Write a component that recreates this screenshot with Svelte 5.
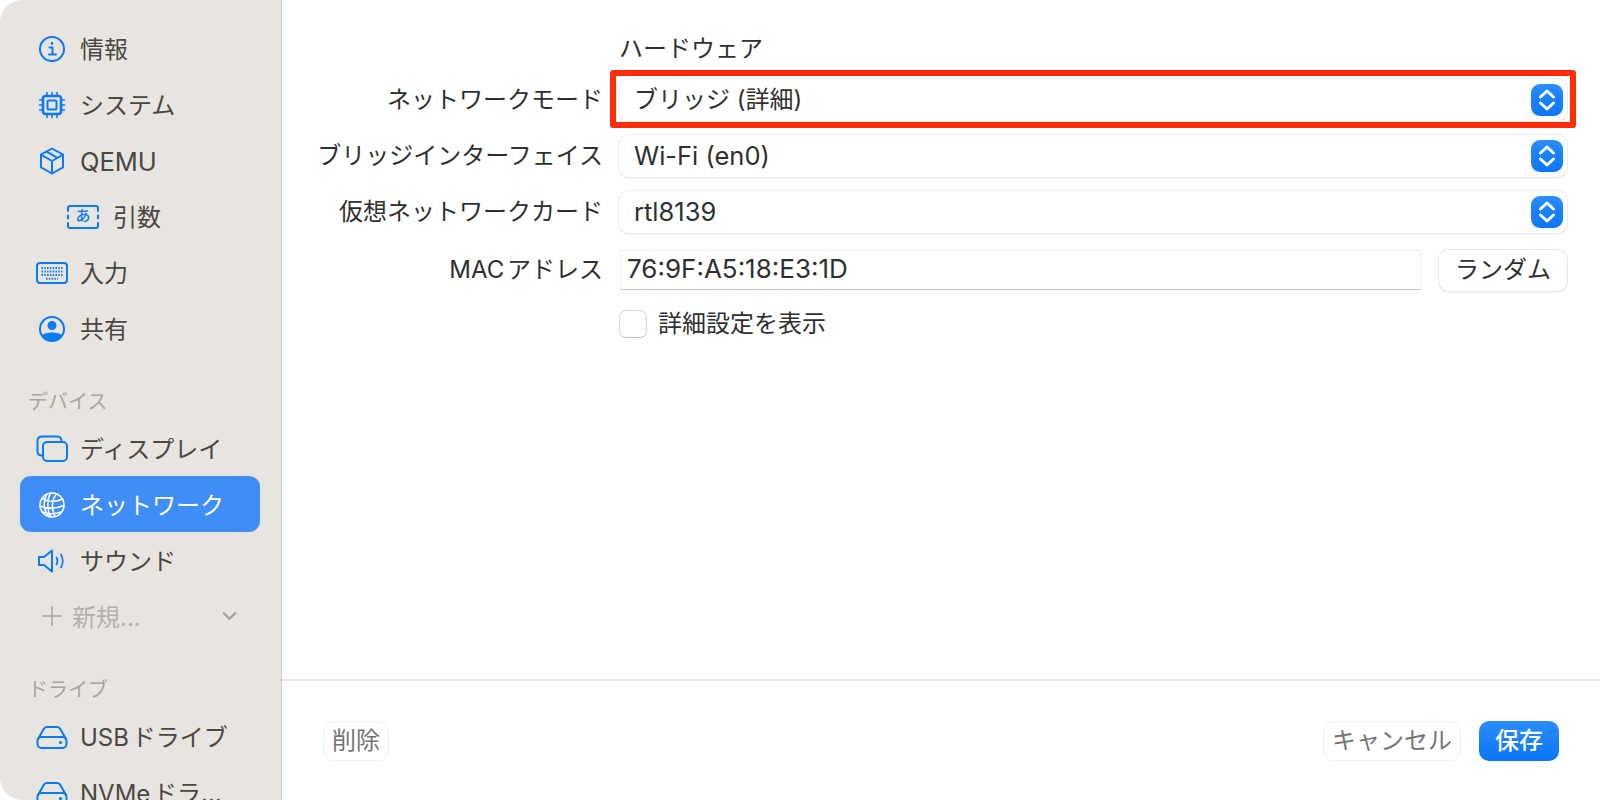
<script>
  const top = [
    { icon: 'info', label: '情報' },
    { icon: 'cpu', label: 'システム' },
    { icon: 'box', label: 'QEMU', latin: true },
    { icon: 'args', label: '引数', sub: true },
    { icon: 'keyboard', label: '入力' },
    { icon: 'person', label: '共有' }
  ];
  const devices = [
    { icon: 'display', label: 'ディスプレイ' },
    { icon: 'globe', label: 'ネットワーク', active: true },
    { icon: 'speaker', label: 'サウンド' }
  ];
  const drives = [
    { icon: 'drive', label: 'USB ドライブ' },
    { icon: 'drive', label: 'NVMe ドライブ' }
  ];
  const selects = [
    { label: 'ネットワークモード', value: 'ブリッジ (詳細)' },
    { label: 'ブリッジインターフェイス', value: 'Wi-Fi (en0)', latin: true },
    { label: '仮想ネットワークカード', value: 'rtl8139', latin: true }
  ];
</script>

{#snippet icon(name)}
  <svg class="ico" viewBox="0 0 32 32" fill="none" stroke="currentColor" stroke-width="2" stroke-linecap="round" stroke-linejoin="round">
    {#if name === 'info'}
      <circle cx="16" cy="16" r="12" />
      <path d="M13.5 14.5H16.5V21.5M13 21.5H20" />
      <circle cx="16" cy="10.5" r="1.4" fill="currentColor" stroke="none" />
    {:else if name === 'cpu'}
      <rect x="7" y="7" width="18" height="18" rx="2.5" stroke-width="2.6" />
      <rect x="11.5" y="11.5" width="9" height="9" rx="1" />
      <path stroke-width="1.6" d="M11 3.5V6M16 3.5V6M21 3.5V6M11 26V28.500M16 26V28.500M21 26V28.500M3.500 11H6M3.500 16H6M3.500 21H6M26 11H28.500M26 16H28.500M26 21H28.500" />
    {:else if name === 'box'}
      <path d="M16 3.500 27 9.700V22.300L16 28.500 5 22.300V9.700Z" />
      <path d="M5 9.700 16 16 27 9.700M16 16V28.500M10.500 6.600 21.500 12.900" />
    {:else if name === 'args'}
      <path d="M1 10V7Q1 5 3 5H29Q31 5 31 7V10M1 22V25Q1 27 3 27H29Q31 27 31 25V22M1 14.500V17.500M31 14.500V17.500" />
    {:else if name === 'keyboard'}
      <rect x="1" y="6" width="30" height="20" rx="3" />
      <path stroke-width="2" stroke-dasharray="1.500 1.300" stroke-linecap="butt" d="M5.500 11H26.500M5.500 14.500H26.500M5.500 18H26.500M10 21.800H22" />
    {:else if name === 'person'}
      <circle cx="16" cy="16" r="12" />
      <circle cx="16" cy="12.500" r="4.500" fill="currentColor" stroke="none" />
      <path d="M6 22.500C8.500 18.500 23.500 18.500 26 22.500 23 30 9 30 6 22.500Z" fill="currentColor" stroke="none" />
    {:else if name === 'display'}
      <path d="M6 22.500Q1.500 22.500 1.500 18V8Q1.500 3.500 6 3.500H21Q25.500 3.500 25.500 8" />
      <rect x="7" y="9" width="24" height="19" rx="4" />
    {:else if name === 'globe'}
      <g stroke-width="1.600">
        <circle cx="16" cy="16" r="12" />
        <path d="M10.500 5.500C6.500 13 8 23 13 27.600M21 5C15.500 9.500 15 21 19 27.500M6 9.500C12 13 21 13 26.500 10M4.200 17C11 20 20 20 27.800 16.500M6 23C12 25 20 25 25 23M15 4C11 9 10.500 22 15 28" />
      </g>
    {:else if name === 'speaker'}
      <path d="M3 12V20H8L16 26.500V5.500L8 12Z" />
      <path stroke-width="1.700" d="M20.500 12.500Q22.500 16 20.500 19.500M25 9.500Q28.500 16 25 22.500" />
    {:else if name === 'drive'}
      <path d="M2 18 8 7.500Q9 6 11 6H21Q23 6 24 7.500L30 18" />
      <rect x="1.500" y="16" width="29" height="11" rx="4" />
      <circle cx="24.500" cy="21.500" r="1.600" fill="currentColor" stroke="none" />
    {/if}
  </svg>
{/snippet}

{#snippet item(row)}
  <div class="item" class:sub={row.sub} class:active={row.active}>
    <span class="ico-box">
      {@render icon(row.icon)}
      {#if row.icon === 'args'}<span class="kana">あ</span>{/if}
    </span>
    <span class="item-label" class:latin={row.latin}>{row.label}</span>
  </div>
{/snippet}

<div class="window">
  <aside class="sidebar">
    {#each top as row}
      {@render item(row)}
    {/each}

    <div class="section">デバイス</div>
    {#each devices as row}
      {@render item(row)}
    {/each}
    <div class="item add">
      <svg class="plus" viewBox="0 0 24 24" fill="none" stroke="currentColor" stroke-width="2" stroke-linecap="round">
        <path d="M12 2V22M2 12H22" />
      </svg>
      <span class="item-label">新規...</span>
      <svg class="chev" viewBox="0 0 16 10" fill="none" stroke="currentColor" stroke-width="2.400" stroke-linecap="round" stroke-linejoin="round">
        <path d="M2 2 8 8 14 2" />
      </svg>
    </div>

    <div class="section">ドライブ</div>
    {#each drives as row}
      {@render item(row)}
    {/each}
  </aside>

  <main class="main">
    <div class="form">
      <div class="highlight"></div>
      <div></div>
      <div class="heading">ハードウェア</div>

      {#each selects as s}
        <div class="label">{s.label}</div>
        <div class="select">
          <span class="value" class:latin={s.latin}>{s.value}</span>
          <span class="stepper">
            <svg viewBox="0 0 32 32" fill="none" stroke="#fff" stroke-width="3" stroke-linecap="round" stroke-linejoin="round">
              <path d="M9.500 13 16 7 22.500 13M9.500 19 16 25 22.500 19" />
            </svg>
          </span>
        </div>
      {/each}

      <div class="label mac-label">MAC アドレス</div>
      <div class="mac-row">
        <div class="mac-input">76:9F:A5:18:E3:1D</div>
        <div class="btn random">ランダム</div>
      </div>

      <div></div>
      <div class="check-row">
        <span class="check"></span>
        <span class="check-text">詳細設定を表示</span>
      </div>
    </div>

    <footer class="footer">
      <div class="btn ghost">削除</div>
      <div class="right">
        <div class="btn ghost">キャンセル</div>
        <div class="btn save">保存</div>
      </div>
    </footer>
  </main>
</div>

<style>
  :global(body) {
    margin: 0;
    background: #fff;
  }

  .window {
    display: flex;
    width: 1600px;
    height: 800px;
    overflow: hidden;
    font-family: Inter, "Noto Sans CJK JP", sans-serif;
    font-size: 24px;
    color: #333;
  }

  .sidebar {
    box-sizing: border-box;
    flex: 0 0 282px;
    height: 800px;
    padding-top: 20px;
    overflow: hidden;
    background: #e8e5e0;
    border-right: 1px solid #cfccc8;
    border-radius: 22px 0 0 22px;
    color: #4a4845;
  }

  .item {
    box-sizing: border-box;
    display: flex;
    align-items: center;
    gap: 12px;
    width: 240px;
    height: 56px;
    margin-left: 20px;
    padding-left: 16px;
    border-radius: 11px;
  }
  .item.sub {
    gap: 14px;
    padding-left: 47px;
  }
  .item.active {
    background: #3f8ef7;
    color: #fff;
  }
  .item.add {
    gap: 9px;
    padding: 0 23px 0 21px;
    color: #b3b0ac;
  }

  .ico-box {
    position: relative;
    display: flex;
    flex: 0 0 32px;
    width: 32px;
    height: 32px;
    margin-top: 2px;
    color: #0a7bf2;
  }
  .active .ico-box {
    color: #fff;
  }
  .ico {
    width: 32px;
    height: 32px;
  }
  .kana {
    position: absolute;
    inset: 0;
    text-align: center;
    font-size: 15px;
    font-weight: 500;
    line-height: 30px;
  }

  .item-label {
    max-width: 148px;
    padding-bottom: 1px;
    overflow: hidden;
    white-space: nowrap;
    text-overflow: ellipsis;
    word-spacing: -4px;
  }
  .item-label.latin {
    padding: 2px 0 0;
    font-size: 25.500px;
  }

  .plus {
    flex: 0 0 22px;
    width: 22px;
    height: 22px;
  }
  .chev {
    width: 15px;
    height: 10px;
    margin-left: auto;
    color: #a19e9a;
  }

  .section {
    height: 32px;
    padding: 32px 0 0 28px;
    font-size: 20px;
    line-height: 28px;
    color: #a9a6a2;
  }

  .main {
    display: flex;
    flex: 1;
    flex-direction: column;
    min-width: 0;
  }

  .form {
    position: relative;
    flex: 1;
    display: grid;
    grid-template-columns: 301px 1fr;
    grid-auto-rows: 56px;
    column-gap: 16px;
    align-items: center;
    align-content: start;
    padding: 16px 33px 0 20px;
    color: #2f2f2f;
  }

  .highlight {
    position: absolute;
    left: 328px;
    top: 70px;
    width: 954px;
    height: 46px;
    border: 6px solid #ff2d0a;
    border-radius: 3px;
  }

  .heading {
    margin-top: 4px;
  }
  .label {
    padding-bottom: 5px;
    text-align: right;
    white-space: nowrap;
    word-spacing: -4px;
  }

  .select {
    box-sizing: border-box;
    display: flex;
    align-items: center;
    justify-content: space-between;
    height: 42px;
    padding: 0 4px 0 15px;
    background: #fff;
    border-radius: 10px;
    box-shadow: 0 0 0 1px #f0eeed, 0 1px 1.500px #bdbbb9;
  }
  .value {
    padding-bottom: 5px;
  }
  .value.latin {
    padding-bottom: 2px;
    font-size: 25.500px;
  }
  .stepper {
    display: flex;
    width: 32px;
    height: 32px;
    background: linear-gradient(#2b8dff, #0a75f6);
    border-radius: 9px;
  }

  .mac-row {
    display: flex;
    align-items: center;
    gap: 18px;
    margin-top: 4px;
  }
  .mac-label {
    margin-top: 4px;
  }
  .mac-input {
    box-sizing: border-box;
    flex: 1;
    height: 40px;
    margin-left: 1px;
    padding-left: 6px;
    font-size: 26px;
    line-height: 36px;
    border: 1px solid #ececec;
    border-bottom-color: #c4c4c4;
  }

  .btn {
    box-sizing: border-box;
    display: flex;
    align-items: center;
    justify-content: center;
    height: 40px;
    padding-bottom: 5px;
    border-radius: 10px;
    white-space: nowrap;
  }
  .random {
    width: 128px;
    height: 41px;
    background: #fff;
    box-shadow: 0 0 0 1px #ebe9e8, 0 1px 1.500px #bdbbb9;
  }

  .check-row {
    display: flex;
    align-items: center;
    gap: 11px;
  }
  .check {
    box-sizing: border-box;
    width: 28px;
    height: 28px;
    border: 1px solid #d8d6d5;
    border-bottom-color: #c2c0bf;
    border-radius: 7px;
  }
  .check-text {
    padding-bottom: 5px;
  }

  .footer {
    box-sizing: border-box;
    display: flex;
    align-items: center;
    justify-content: space-between;
    flex: 0 0 121px;
    padding: 0 41px;
    border-top: 2px solid #e8e8e8;
  }
  .right {
    display: flex;
    align-items: center;
    gap: 18px;
  }
  .ghost {
    padding: 0 8px 5px;
    color: #747474;
    border: 1.500px solid #f2f2f2;
  }
  .save {
    width: 80px;
    color: #fff;
    font-weight: 500;
    background: linear-gradient(#2b8dff, #0a75f6);
  }
</style>
